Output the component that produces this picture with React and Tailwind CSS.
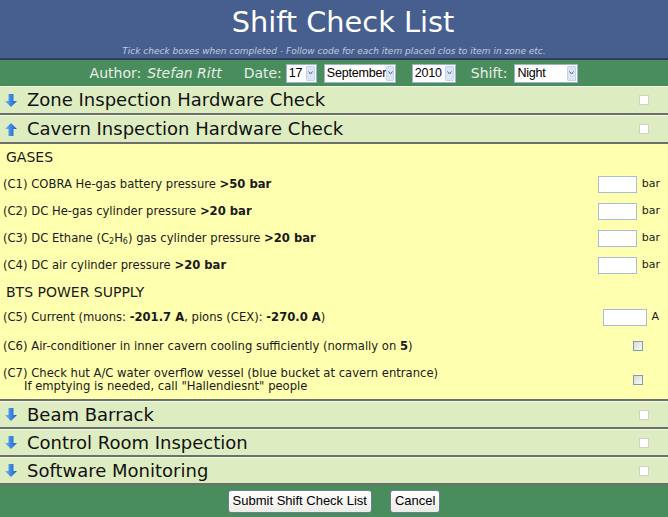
import React from "react";

const verdana = { fontFamily: '"DejaVu Sans", Verdana, sans-serif' };
const arial = { fontFamily: '"Liberation Sans", Arial, sans-serif' };

const Arrow = ({ up }) => (
  <svg width="12" height="13" viewBox="0 0 12 13" className="shrink-0">
    <defs>
      <linearGradient id={up ? "gu" : "gd"} x1="0" y1="0" x2="1" y2="0">
        <stop offset="0" stopColor="#7db4f2" />
        <stop offset="0.5" stopColor="#3a86e0" />
        <stop offset="1" stopColor="#1d5fc0" />
      </linearGradient>
    </defs>
    {up ? (
      <path d="M6 0 L12 6 L8.5 6 L8.5 13 L3.5 13 L3.5 6 L0 6 Z" fill="url(#gu)" />
    ) : (
      <path d="M3.5 0 L8.5 0 L8.5 7 L12 7 L6 13 L0 7 L3.5 7 Z" fill="url(#gd)" />
    )}
  </svg>
);

const SectionRow = ({ title, up, tall }) => (
  <div
    className={`flex items-center ${tall ? "h-[29px]" : "h-[28px]"} bg-[#deedc1] border-t border-t-[#f1f8e3] border-b-2 border-b-[#6c6f6a] pl-[5px] pr-[19px]`}
  >
    <Arrow up={up} />
    <span className="ml-[10px] text-[18px] text-[#111] leading-none" style={verdana}>
      {title}
    </span>
    <span className="ml-auto w-[10px] h-[10px] bg-white border border-[#cfd3c8]" />
  </div>
);

const Select = ({ value, w }) => (
  <div
    className={`flex items-center justify-between h-[19px] bg-white border border-[#9fb3cc] pl-[2px] pr-[1px] ${w}`}
    style={arial}
  >
    <span className="text-[12.5px] tracking-[-0.2px] text-black leading-none">{value}</span>
    <span className="flex items-center justify-center w-[9px] h-[15px] bg-[#dbe5f4] border border-[#c6d3e8] rounded-[1px]">
      <svg width="5" height="4" viewBox="0 0 5 4">
        <path d="M0.5 0.5 L2.5 3 L4.5 0.5" stroke="#4d6185" strokeWidth="1" fill="none" />
      </svg>
    </span>
  </div>
);

const Input = ({ w }) => (
  <span className={`${w} h-[17px] bg-white border border-[#a8bcd3]`} />
);

const Check = () => (
  <span className="w-[10px] h-[10px] border border-[#7f9db9] bg-gradient-to-br from-[#dcdcd6] to-[#f8f8f4]" />
);

const ItemRow = ({ h, children, right, pr }) => (
  <div className={`flex items-center justify-between ${h} pl-[3px] ${pr}`}>
    <div className="text-[11.6px] text-[#1a1a1a] leading-[13px]">{children}</div>
    <div className="flex items-center">{right}</div>
  </div>
);

const Bar = () => (
  <>
    <Input w="w-[39px]" />
    <span className="ml-[5px] text-[11px] text-[#1a1a1a]">bar</span>
  </>
);

export default function App() {
  return (
    <div className="w-[668px] h-[517px] overflow-hidden bg-white" style={verdana}>
      {/* header */}
      <div className="h-[60px] bg-[#465f8e] border-b-2 border-b-[#2e3f5c] flex flex-col items-center">
        <div className="mt-[6px] pl-[18px] text-[28.8px] leading-[32px] text-white">Shift Check List</div>
        <div className="mt-[8px] text-[9px] leading-[10px] italic text-[#c3cbdb]">
          Tick check boxes when completed - Follow code for each item placed clos to item in zone etc.
        </div>
      </div>

      {/* author bar */}
      <div className="h-[26px] bg-[#4a8d5d] flex items-center justify-center text-[14px] text-[#e8efe8]">
        <span>Author:</span>
        <span className="ml-[6px] italic">Stefan Ritt</span>
        <span className="ml-[22px]">Date:</span>
        <div className="ml-[4px]">
          <Select value="17" w="w-[31px]" />
        </div>
        <div className="ml-[7px]">
          <Select value="September" w="w-[72px]" />
        </div>
        <div className="ml-[16px]">
          <Select value="2010" w="w-[44px]" />
        </div>
        <span className="ml-[15px]">Shift:</span>
        <div className="ml-[7px]">
          <Select value="Night" w="w-[64px]" />
        </div>
      </div>

      <SectionRow title="Zone Inspection Hardware Check" tall />
      <SectionRow title="Cavern Inspection Hardware Check" up tall />

      {/* expanded section */}
      <div className="h-[257px] bg-[#ffffb0] border-b-2 border-b-[#6c6f6a]">
        <div className="h-[27px] flex items-center pl-[6px] text-[14px] text-[#1a1a1a]">GASES</div>
        <ItemRow h="h-[27px]" pr="pr-[8px]" right={<Bar />}>
          (C1) COBRA He-gas battery pressure <b>&gt;50 bar</b>
        </ItemRow>
        <ItemRow h="h-[27px]" pr="pr-[8px]" right={<Bar />}>
          (C2) DC He-gas cylinder pressure <b>&gt;20 bar</b>
        </ItemRow>
        <ItemRow h="h-[27px]" pr="pr-[8px]" right={<Bar />}>
          (C3) DC Ethane (C<sub className="text-[8px]">2</sub>H<sub className="text-[8px]">6</sub>) gas cylinder pressure <b>&gt;20 bar</b>
        </ItemRow>
        <ItemRow h="h-[27px]" pr="pr-[8px]" right={<Bar />}>
          (C4) DC air cylinder pressure <b>&gt;20 bar</b>
        </ItemRow>
        <div className="h-[26px] flex items-center pl-[6px] text-[14px] text-[#1a1a1a]">BTS POWER SUPPLY</div>
        <ItemRow
          h="h-[25px]"
          pr="pr-[9px]"
          right={
            <>
              <Input w="w-[44px]" />
              <span className="ml-[4px] text-[11px] text-[#1a1a1a]">A</span>
            </>
          }
        >
          (C5) Current (muons: <b>-201.7 A</b>, pions (CEX): <b>-270.0 A</b>)
        </ItemRow>
        <ItemRow h="h-[32px]" pr="pr-[25px]" right={<Check />}>
          (C6) Air-conditioner in inner cavern cooling sufficiently (normally on <b>5</b>)
        </ItemRow>
        <ItemRow h="h-[36px]" pr="pr-[25px]" right={<Check />}>
          <div>(C7) Check hut A/C water overflow vessel (blue bucket at cavern entrance)</div>
          <div className="pl-[21px]">If emptying is needed, call "Hallendiesnt" people</div>
        </ItemRow>
      </div>

      <SectionRow title="Beam Barrack" />
      <SectionRow title="Control Room Inspection" />
      <SectionRow title="Software Monitoring" />

      {/* footer */}
      <div className="h-[32px] bg-[#4a8d5d] flex items-center justify-center gap-[18px]" style={arial}>
        <button className="h-[23px] px-[4px] text-[13px] text-black bg-gradient-to-b from-white to-[#ecebe6] border border-[#6f7f93] rounded-[3px]">
          Submit Shift Check List
        </button>
        <button className="h-[23px] px-[4px] text-[13px] text-black bg-gradient-to-b from-white to-[#ecebe6] border border-[#6f7f93] rounded-[3px]">
          Cancel
        </button>
      </div>
    </div>
  );
}
